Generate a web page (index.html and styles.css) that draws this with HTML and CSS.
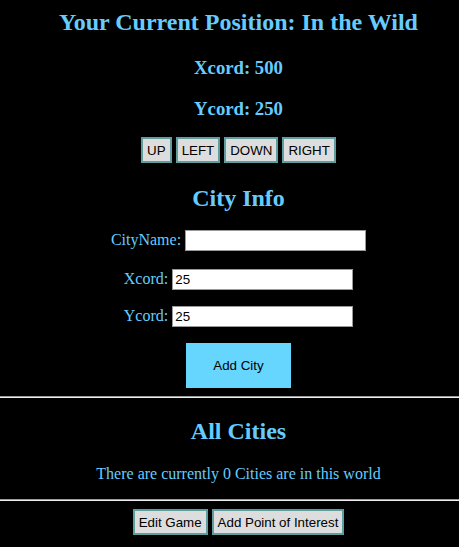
FILE: index.html
```html
<!DOCTYPE html>
<html>
<head>
<meta charset="utf-8">
<link rel="stylesheet" href="styles.css">
</head>
<body>
<div class="page">
  <h2 class="title">Your Current Position: In the Wild</h2>
  <h3 class="coord first">Xcord: 500</h3>
  <h3 class="coord">Ycord: 250</h3>
  <div class="moves">
    <button class="btn">UP</button>
    <button class="btn">LEFT</button>
    <button class="btn">DOWN</button>
    <button class="btn">RIGHT</button>
  </div>
  <h2 class="section">City Info</h2>
  <div class="field first"><label>CityName:</label> <input class="text" type="text"></div>
  <div class="field"><label>Xcord:</label> <input class="text" type="text" value="25"></div>
  <div class="field"><label>Ycord:</label> <input class="text" type="text" value="25"></div>
  <button class="add">Add City</button>
</div>
<hr class="rule">
<div class="page">
  <h2 class="section cities">All Cities</h2>
  <p class="count">There are currently 0 Cities are in this world</p>
</div>
<hr class="rule">
<div class="page footer">
  <button class="btn">Edit Game</button>
  <button class="btn">Add Point of Interest</button>
</div>
</body>
</html>
```
FILE: styles.css
```css
html, body {
  margin: 0;
  background: #000;
}
.page {
  padding-left: 18px;
  text-align: center;
  font-family: "Liberation Serif", serif;
  color: #66ccff;
}
.title {
  font-size: 24px;
  margin: 8px 0 21px;
  line-height: 28px;
}
.coord {
  font-size: 18.72px;
  line-height: 22px;
  margin: 0 0 17px;
}
.coord.first {
  margin-bottom: 19px;
}
.moves {
  margin-top: 0;
  height: 26px;
}
.btn {
  font-family: "Liberation Sans", Arial, sans-serif;
  font-size: 13.33px;
  color: #000;
  background: #dddddd;
  border: 2px solid #5f9ea0;
  padding: 3px 4px;
  height: 26px;
  margin: 0;
  vertical-align: top;
}
.section {
  font-size: 24px;
  line-height: 28px;
  margin: 21px 0 17px;
}
.field {
  font-size: 16px;
  height: 22px;
  margin-bottom: 15px;
  display: flex;
  justify-content: center;
  align-items: center;
  gap: 4px;
}
.field.first {
  margin-bottom: 17px;
}
.field label {
  line-height: 22px;
}
.text {
  box-sizing: border-box;
  width: 181px;
  height: 21px;
  border: 1px solid #999;
  background: #fff;
  padding: 1px 2px;
  font-family: "Liberation Sans", Arial, sans-serif;
  font-size: 13.33px;
  color: #000;
  margin: 0;
}
.add {
  font-family: "Liberation Sans", Arial, sans-serif;
  font-size: 13.33px;
  color: #000;
  background: #66d6ff;
  border: none;
  width: 105px;
  height: 45px;
  margin: 1px 0 8px;
  padding: 0;
}
.rule {
  margin: 0;
  border: none;
  border-top: 1px solid #9a9a9a;
  border-bottom: 1px solid #eeeeee;
}
.cities {
  margin: 19px 0 19px;
}
.count {
  font-size: 16px;
  line-height: 20px;
  margin: 0 0 15px;
}
.footer {
  padding-top: 8px;
  padding-bottom: 10px;
}
```
